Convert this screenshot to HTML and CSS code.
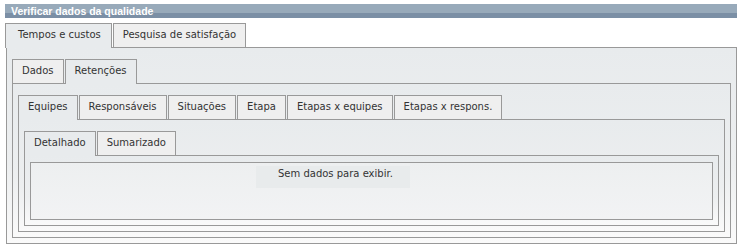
FILE: index.html
```html
<!DOCTYPE html>
<html lang="pt">
<head>
<meta charset="utf-8">
<title>Verificar dados da qualidade</title>
<link rel="stylesheet" href="styles.css">
</head>
<body>
<div class="win">
  <div class="title">Verificar dados da qualidade</div>
  <div class="tabset top">
    <div class="strip">
      <span class="tab sel wide">Tempos e custos</span>
      <span class="tab">Pesquisa de satisfação</span>
    </div>
    <div class="panel">
      <div class="tabset">
        <div class="strip">
          <span class="tab">Dados</span>
          <span class="tab sel">Retenções</span>
        </div>
        <div class="panel">
          <div class="tabset">
            <div class="strip">
              <span class="tab sel">Equipes</span>
              <span class="tab">Responsáveis</span>
              <span class="tab">Situações</span>
              <span class="tab">Etapa</span>
              <span class="tab">Etapas x equipes</span>
              <span class="tab">Etapas x respons.</span>
            </div>
            <div class="panel">
              <div class="tabset">
                <div class="strip">
                  <span class="tab sel">Detalhado</span>
                  <span class="tab">Sumarizado</span>
                </div>
                <div class="panel last">
                  <div class="grid">
                    <div class="empty">Sem dados para exibir.</div>
                  </div>
                </div>
              </div>
            </div>
          </div>
        </div>
      </div>
    </div>
  </div>
</div>
</body>
</html>
```

FILE: styles.css
```css
html, body {
  margin: 0;
  padding: 0;
  background: #ffffff;
}
body {
  font-family: "DejaVu Sans", Verdana, sans-serif;
  font-size: 10px;
  color: #333333;
}
.win {
  margin: 4px 0 0 5px;
  width: 732px;
}
.title {
  height: 14px;
  line-height: 14px;
  padding-left: 6px;
  color: #ffffff;
  font-family: "Liberation Sans", Arial, sans-serif;
  font-weight: bold;
  font-size: 10.5px;
  background: linear-gradient(to bottom, #98aaba 0, #98aaba 9px, #7b8fa5 9px, #7b8fa5 100%);
}
.tabset.top {
  margin-top: 5px;
}
.tabset {
  margin-top: 6px;
}
.tabset.top > .panel {
  margin-left: 1px;
}
.strip {
  display: flex;
  align-items: flex-end;
  height: 24px;
}
.tab {
  box-sizing: border-box;
  height: 24px;
  line-height: 22px;
  padding: 0 9px;
  margin-right: 1px;
  border: 1px solid #999999;
  border-bottom: none;
  background: #efefef;
  white-space: nowrap;
}
.tab.wide {
  padding: 0 10px 0 12px;
}
.tab.sel {
  position: relative;
  z-index: 1;
  height: 25px;
  margin-bottom: -1px;
  background: #e8ebed;
}
.panel {
  border: 1px solid #999999;
  padding: 5px;
  background: linear-gradient(to bottom, #e8ebed 0, #edeff0 60%, #fafafa 100%);
}
.panel.last {
  padding-top: 6px;
}
.grid {
  height: 53px;
  border: 1px solid #999999;
  background: linear-gradient(to bottom, #edeff0, #f2f3f4);
  padding-top: 3px;
}
.empty {
  margin-left: 225px;
  width: 154px;
  height: 22px;
  line-height: 16px;
  box-sizing: border-box;
  padding-left: 22px;
  background: #e8ebec;
  white-space: nowrap;
}
```
